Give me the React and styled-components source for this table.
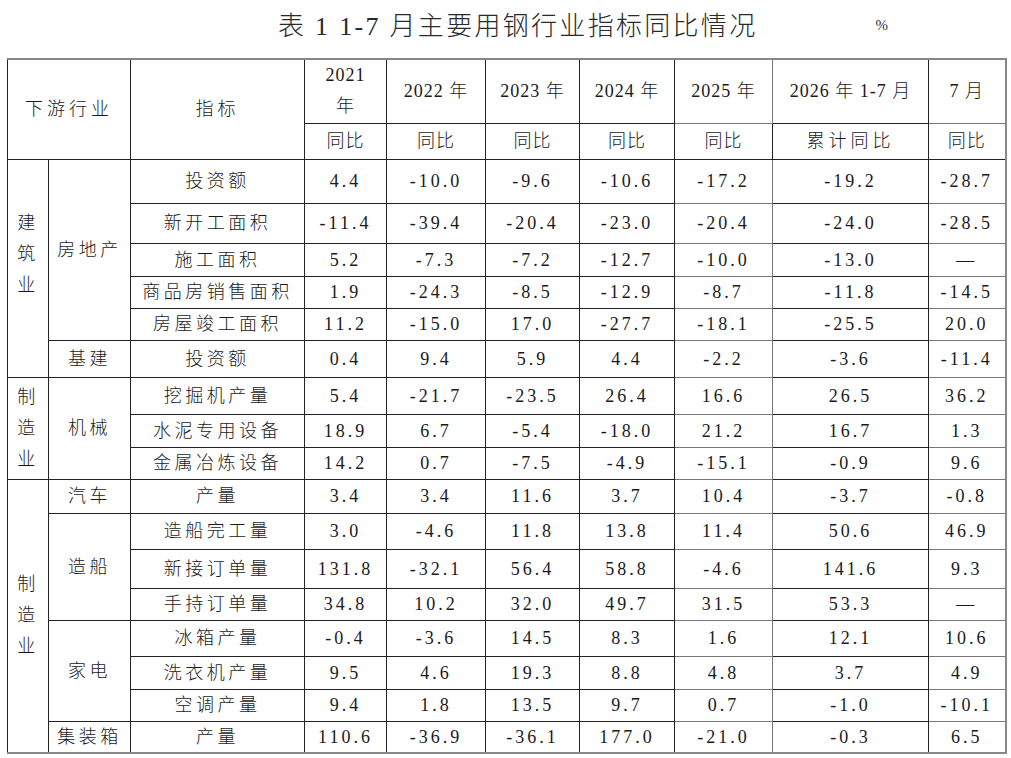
import React from 'react';
import styled, { createGlobalStyle } from 'styled-components';

const GlobalStyle = createGlobalStyle`
  html, body {
    margin: 0;
    padding: 0;
    background: #ffffff;
  }
  body {
    font-family: "Liberation Serif", "Noto Sans CJK SC", serif;
    color: #111;
  }
`;

const COLS = [41, 82, 174, 82, 99, 94, 95, 98, 156, 77];

const ROWS = [
  { group: { text: '建筑业', span: 6, lift: 28 }, sub: { text: '房地产', span: 5 }, name: '投资额', h: 44, v: ['4.4', '-10.0', '-9.6', '-10.6', '-17.2', '-19.2', '-28.7'] },
  { name: '新开工面积', h: 40, v: ['-11.4', '-39.4', '-20.4', '-23.0', '-20.4', '-24.0', '-28.5'] },
  { name: '施工面积', h: 33, v: ['5.2', '-7.3', '-7.2', '-12.7', '-10.0', '-13.0', '—'] },
  { name: '商品房销售面积', h: 32, v: ['1.9', '-24.3', '-8.5', '-12.9', '-8.7', '-11.8', '-14.5'] },
  { name: '房屋竣工面积', h: 32, v: ['11.2', '-15.0', '17.0', '-27.7', '-18.1', '-25.5', '20.0'] },
  { sub: { text: '基建', span: 1 }, name: '投资额', h: 37, v: ['0.4', '9.4', '5.9', '4.4', '-2.2', '-3.6', '-11.4'] },
  { group: { text: '制造业', span: 3 }, sub: { text: '机械', span: 3 }, name: '挖掘机产量', h: 37, v: ['5.4', '-21.7', '-23.5', '26.4', '16.6', '26.5', '36.2'] },
  { name: '水泥专用设备', h: 33, v: ['18.9', '6.7', '-5.4', '-18.0', '21.2', '16.7', '1.3'] },
  { name: '金属冶炼设备', h: 32, v: ['14.2', '0.7', '-7.5', '-4.9', '-15.1', '-0.9', '9.6'] },
  { group: { text: '制造业', span: 8 }, sub: { text: '汽车', span: 1 }, name: '产量', h: 34, v: ['3.4', '3.4', '11.6', '3.7', '10.4', '-3.7', '-0.8'] },
  { sub: { text: '造船', span: 3 }, name: '造船完工量', h: 36, v: ['3.0', '-4.6', '11.8', '13.8', '11.4', '50.6', '46.9'] },
  { name: '新接订单量', h: 39, v: ['131.8', '-32.1', '56.4', '58.8', '-4.6', '141.6', '9.3'] },
  { name: '手持订单量', h: 32, v: ['34.8', '10.2', '32.0', '49.7', '31.5', '53.3', '—'] },
  { sub: { text: '家电', span: 3 }, name: '冰箱产量', h: 36, v: ['-0.4', '-3.6', '14.5', '8.3', '1.6', '12.1', '10.6'] },
  { name: '洗衣机产量', h: 33, v: ['9.5', '4.6', '19.3', '8.8', '4.8', '3.7', '4.9'] },
  { name: '空调产量', h: 32, v: ['9.4', '1.8', '13.5', '9.7', '0.7', '-1.0', '-10.1'] },
  { sub: { text: '集装箱', span: 1 }, name: '产量', h: 32, v: ['110.6', '-36.9', '-36.1', '177.0', '-21.0', '-0.3', '6.5'] },
];

const YEARS = ['2022 年', '2023 年', '2024 年', '2025 年', '2026 年 1-7 月', '7 月'];
const SUBHEAD = ['同比', '同比', '同比', '同比', '同比', '累计同比', '同比'];

const Page = styled.div`
  width: 1011px;
  padding: 0 0 6px 7px;
  box-sizing: border-box;
`;

const TitleRow = styled.div`
  display: flex;
  align-items: center;
  height: 58px;
  padding-left: 271px;
`;

const Title = styled.h1`
  margin: 0 0 12px;
  font-family: "Liberation Serif", "Noto Sans CJK SC", serif;
  font-size: 26px;
  font-weight: 300;
  letter-spacing: 2.3px;
  color: #2a2a2a;
`;

const Percent = styled.span`
  margin: 0 0 8px 118px;
  font-size: 15px;
  color: #333;
`;

const Table = styled.table`
  width: 998px;
  table-layout: fixed;
  border-collapse: collapse;
  border-top: 2px solid #888;
  border-right: 2px solid #888;
  border-bottom: 2px solid #888;
  border-left: 1.5px solid #222;
`;

const Row = styled.tr`
  height: ${(p) => p.$h}px;
`;

const Cell = styled.td`
  padding: 0;
  border: 1.5px solid ${(p) => (p.$soft ? '#777' : '#222')};
  text-align: center;
  vertical-align: middle;
  font-size: 18px;
  font-weight: 300;
  line-height: 24px;
  letter-spacing: ${(p) => (p.$num ? '3px' : '3.5px')};
  color: #1a1a1a;
  white-space: nowrap;
`;

const NumCell = styled(Cell)`
  font-weight: 400;
`;

const HeadCell = styled(Cell)`
  letter-spacing: ${(p) => (p.$wide ? '4px' : '1px')};
  line-height: 31px;
`;

const Stack = styled.div`
  display: flex;
  flex-direction: column;
  align-items: center;
  line-height: 31px;
  font-size: 18px;
  padding-bottom: ${(p) => p.$lift || 0}px;
`;

const VerticalText = ({ text, lift }) => (
  <Stack $lift={lift}>
    {text.split('').map((c, i) => (
      <span key={i}>{c}</span>
    ))}
  </Stack>
);

const App = () => {
  return (
    <Page>
      <GlobalStyle />
      <TitleRow>
        <Title>表 1 1-7 月主要用钢行业指标同比情况</Title>
        <Percent>%</Percent>
      </TitleRow>
      <Table>
        <colgroup>
          {COLS.map((w, i) => (
            <col key={i} style={{ width: w }} />
          ))}
        </colgroup>
        <thead>
          <Row $h={64}>
            <HeadCell colSpan={2} rowSpan={2} $wide>下游行业</HeadCell>
            <HeadCell rowSpan={2} $wide>指标</HeadCell>
            <HeadCell>
              2021
              <br />
              年
            </HeadCell>
            {YEARS.map((y, i) => (
              <HeadCell key={y} $soft={i === 3 || i === 5}>{y}</HeadCell>
            ))}
          </Row>
          <Row $h={36}>
            {SUBHEAD.map((s, i) => (
              <HeadCell key={i} $wide={s === '累计同比'}>{s}</HeadCell>
            ))}
          </Row>
        </thead>
        <tbody>
          {ROWS.map((r, i) => (
            <Row key={i} $h={r.h}>
              {r.group && (
                <Cell rowSpan={r.group.span}>
                  <VerticalText text={r.group.text} lift={r.group.lift} />
                </Cell>
              )}
              {r.sub && <Cell rowSpan={r.sub.span}>{r.sub.text}</Cell>}
              <Cell>{r.name}</Cell>
              {r.v.map((v, j) => (
                <NumCell key={j} $num $soft={j === 4 || j === 6}>{v}</NumCell>
              ))}
            </Row>
          ))}
        </tbody>
      </Table>
    </Page>
  );
};

export default App;
